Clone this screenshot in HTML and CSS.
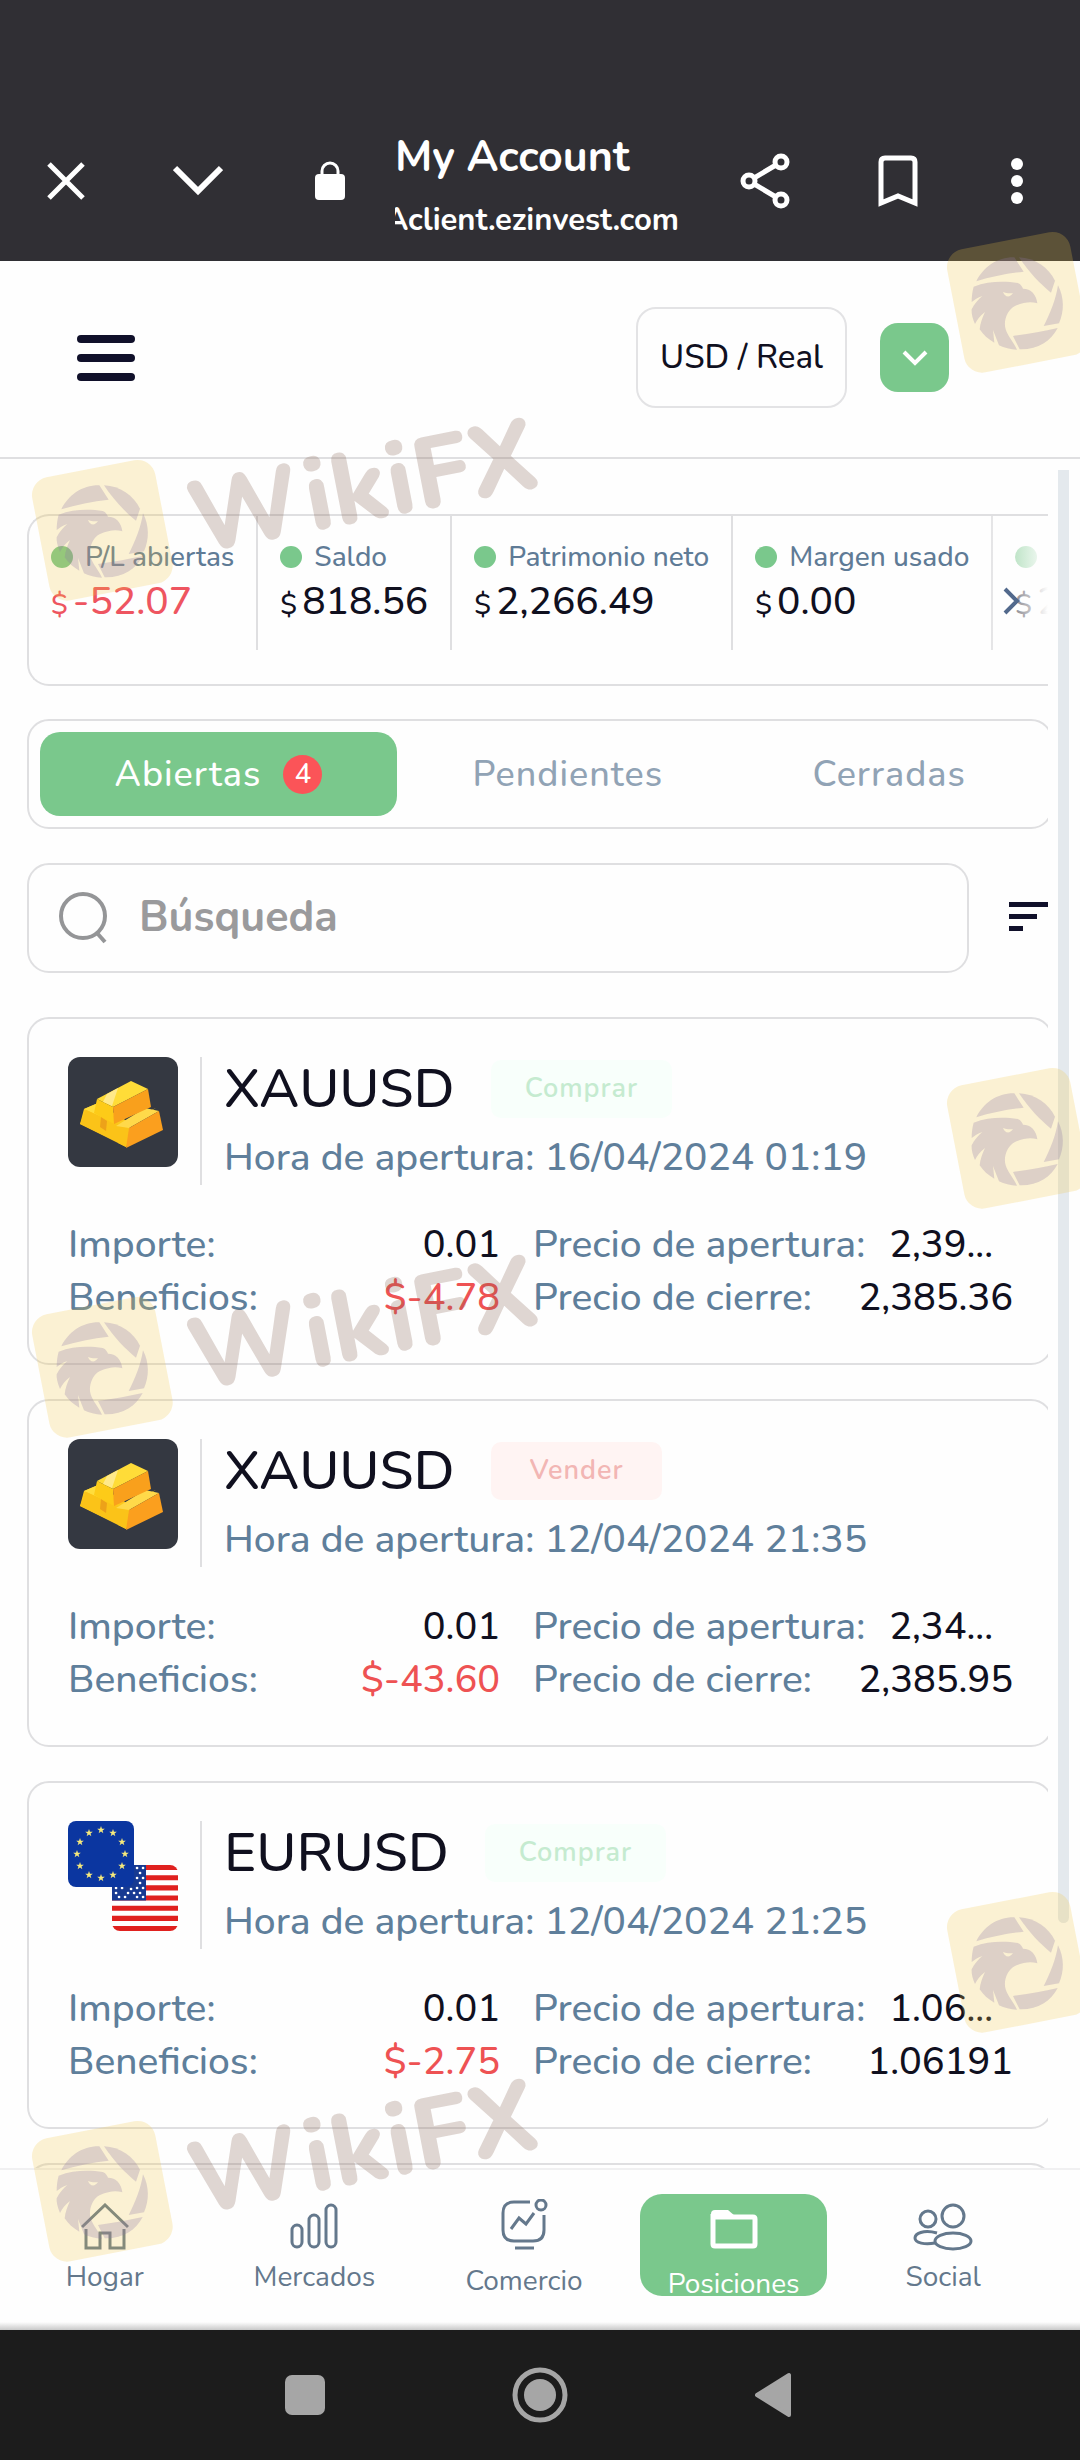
FILE: index.html
```html
<!DOCTYPE html>
<html lang="es">
<head>
    <meta charset="UTF-8">
    <meta name="viewport" content="width=device-width, initial-scale=1.0">
    <title>My Account</title>
    <link rel="stylesheet" href="styles.css">
</head>
<body>
    <!-- shared drawings -->
    <svg class="defs" width="0" height="0" aria-hidden="true">
        <symbol id="gold" viewBox="0 0 110 110">
            <rect width="110" height="110" rx="12" fill="#343841"/>
            <path d="M16 52 30 46 62 66 60 90 12 67z" fill="#fcc81c"/>
            <path d="M16 52 30 46 40 56 34 60z" fill="#ffdd3c"/>
            <path d="M47 70 88 51 60 68 58 90 50 86z" fill="#fdc81a"/>
            <path d="M12 67 58 90 61 72 18 53z" fill="#fbc318"/>
            <path d="M33 60 39 64 38 74 32 70z" fill="#eda219"/>
            <path d="M48 69 77 51 91 54 61 71z" fill="#ffd94a"/>
            <path d="M61 71 91 54 95 73 58 91z" fill="#fb9f1e"/>
            <path d="M29 42 63 24 80 32 45 50z" fill="#ffdc38"/>
            <path d="M39 37 50 31 44 49 35 45z" fill="#ffe98a"/>
            <path d="M29 42 45 50 46 67 26 56z" fill="#fdcb18"/>
            <path d="M45 50 80 32 83 50 46 67z" fill="#f9a01c"/>
        </symbol>
        <symbol id="star" viewBox="-10 -10 20 20">
            <path d="M0-10 2.4-3.2 9.5-3.1 3.8 1.2 5.9 8.1 0 4 -5.9 8.1 -3.8 1.2 -9.5-3.1 -2.4-3.2z"/>
        </symbol>
        <!-- tile with the eagle inside a shutter ring -->
        <symbol id="eagle" viewBox="0 0 450 480">
            <rect x="47" y="47" width="376" height="376" rx="54" transform="rotate(-11 235 235)" fill="#f0c846" fill-opacity=".23"/>
            <g fill="#8c78a5" fill-opacity=".27">
                <path d="M112 172C134 128 176 99 226 100L254 143C206 148 156 158 112 172z"/>
                <path d="M240 100C288 102 328 130 348 170L336 206C306 182 270 146 240 100z"/>
                <path d="M357 184C376 222 376 262 360 298L314 306C334 268 350 228 357 184z"/>
                <path d="M356 312C336 352 294 378 242 376L222 336C268 330 312 322 356 312z"/>
                <path d="M104 188C150 170 200 172 236 177C246 180 250 190 252 194C276 194 292 212 295 238C276 232 256 234 228 246C206 256 192 290 200 316C206 336 222 352 234 377C214 376 196 372 180 364L162 318 166 356C148 346 132 332 122 316C124 296 130 282 138 264C122 276 114 288 108 300C100 282 97 266 98 256C106 240 116 228 130 216C116 220 106 228 98 234C98 218 100 202 104 188zM192 204C198 220 212 222 222 208C212 208 202 208 192 204z" fill-rule="evenodd"/>
            </g>
        </symbol>
    </svg>

    <!-- browser bar -->
    <header class="browser">
        <button class="icon-btn" aria-label="Cerrar">
            <svg width="38" height="38" viewBox="0 0 38 38"><path d="M2 2 36 36M36 2 2 36" stroke="#fff" stroke-width="5" fill="none"/></svg>
        </button>
        <button class="icon-btn" aria-label="Minimizar">
            <svg width="50" height="32" viewBox="0 0 50 32"><path d="M2 3 25 26 48 3" stroke="#fff" stroke-width="6" fill="none"/></svg>
        </button>
        <svg class="lock" width="30" height="40" viewBox="0 0 30 40"><path d="M7 14V10a8 8 0 0 1 16 0v4" stroke="#fff" stroke-width="3" fill="none"/><rect y="13" width="30" height="26" rx="4" fill="#fff"/></svg>
        <div class="page-id">
            <p class="page-title">My Account</p>
            <p class="page-url"><span>Aclient.ezinvest.com</span></p>
        </div>
        <button class="icon-btn" aria-label="Compartir">
            <svg width="50" height="56" viewBox="0 0 50 56"><g fill="none" stroke="#fff" stroke-width="5"><path d="M41 9 9 28 41 47"/><g fill="#302f34"><circle cx="41" cy="9" r="6"/><circle cx="9" cy="28" r="6"/><circle cx="41" cy="47" r="6"/></g></g></svg>
        </button>
        <button class="icon-btn" aria-label="Guardar">
            <svg width="40" height="52" viewBox="0 0 40 52"><path d="M3 48V7q0-4 4-4h26q4 0 4 4v41L20 41z" fill="none" stroke="#fff" stroke-width="5"/></svg>
        </button>
        <button class="icon-btn" aria-label="Más">
            <svg width="14" height="48" viewBox="0 0 14 48"><g fill="#fff"><circle cx="7" cy="7" r="6"/><circle cx="7" cy="24" r="6"/><circle cx="7" cy="41" r="6"/></g></svg>
        </button>
    </header>

    <div class="topbar">
        <button class="menu" aria-label="Menú"><i></i><i></i><i></i></button>
        <button class="account">USD / Real</button>
        <button class="drop" aria-label="Cambiar cuenta">
            <svg width="28" height="20" viewBox="0 0 28 20"><path d="M3 4 14 15 25 4" fill="none" stroke="#fff" stroke-width="4"/></svg>
        </button>
    </div>

    <main class="main">
        <div class="content">
            <div class="stats">
                <div class="stat loss"><p class="stat-name">P/L abiertas</p><p class="stat-value"><small>$</small>-52.07</p></div>
                <div class="stat"><p class="stat-name">Saldo</p><p class="stat-value"><small>$</small>818.56</p></div>
                <div class="stat"><p class="stat-name">Patrimonio neto</p><p class="stat-value"><small>$</small>2,266.49</p></div>
                <div class="stat"><p class="stat-name">Margen usado</p><p class="stat-value"><small>$</small>0.00</p></div>
                <div class="stat"><p class="stat-name">&nbsp;</p><p class="stat-value"><small>$</small>2</p></div>
                <button class="next" aria-label="Siguiente">
                    <svg width="18" height="30" viewBox="0 0 18 30"><path d="M3 3 15 15 3 27" fill="none" stroke="#52698c" stroke-width="4"/></svg>
                </button>
            </div>

            <div class="tabs">
                <button class="tab active">Abiertas <span class="count">4</span></button>
                <button class="tab">Pendientes</button>
                <button class="tab">Cerradas</button>
            </div>

            <div class="search-row">
                <label class="search">
                    <svg width="50" height="54" viewBox="0 0 50 54"><g fill="none" stroke="#949597" stroke-width="4"><circle cx="24" cy="25" r="22"/><path d="M38 42 46 51"/></g></svg>
                    <input type="text" placeholder="Búsqueda" aria-label="Búsqueda">
                </label>
                <button class="sort" aria-label="Ordenar"><i></i><i></i><i></i></button>
            </div>

            <div class="card">
                <div class="card-head">
                    <svg class="pair" width="110" height="110"><use href="#gold"/></svg>
                    <div class="card-title">
                        <h2>XAUUSD <span class="side buy">Comprar</span></h2>
                        <p>Hora de apertura: 16/04/2024 01:19</p>
                    </div>
                </div>
                <dl>
                    <div><dt>Importe:</dt><dd>0.01</dd></div>
                    <div><dt>Precio de apertura:</dt><dd class="cut">2,39...</dd></div>
                    <div><dt>Beneficios:</dt><dd class="red">$-4.78</dd></div>
                    <div><dt>Precio de cierre:</dt><dd>2,385.36</dd></div>
                </dl>
            </div>

            <div class="card">
                <div class="card-head">
                    <svg class="pair" width="110" height="110"><use href="#gold"/></svg>
                    <div class="card-title">
                        <h2>XAUUSD <span class="side sell">Vender</span></h2>
                        <p>Hora de apertura: 12/04/2024 21:35</p>
                    </div>
                </div>
                <dl>
                    <div><dt>Importe:</dt><dd>0.01</dd></div>
                    <div><dt>Precio de apertura:</dt><dd class="cut">2,34...</dd></div>
                    <div><dt>Beneficios:</dt><dd class="red">$-43.60</dd></div>
                    <div><dt>Precio de cierre:</dt><dd>2,385.95</dd></div>
                </dl>
            </div>

            <div class="card">
                <div class="card-head">
                    <svg class="pair" width="110" height="110" viewBox="0 0 110 110">
                        <clipPath id="us"><rect x="44" y="44" width="66" height="66" rx="8"/></clipPath>
                        <g clip-path="url(#us)">
                            <rect x="44" y="44" width="66" height="66" fill="#fff"/>
                            <path d="M44 46.500h66M44 56.700h66M44 66.900h66M44 77h66M44 87.200h66M44 97.400h66M44 107.500h66" stroke="#e0211f" stroke-width="5.100"/>
                            <rect x="44" y="44" width="34" height="35.500" fill="#173a92"/>
                            <path d="M69 47h.1M75 47h.1M72 52h.1M69 57h.1M75 57h.1M72 62h.1M69 67h.1M75 67h.1M48 72h.1M54 67h.1M60 72h.1M66 72h.1M48 67h.1M57 76h.1M63 68h.1M69 76h.1M75 76h.1M72 72h.1M51 76h.1" stroke="#fff" stroke-width="2.600" stroke-linecap="round"/>
                        </g>
                        <rect width="66" height="66" rx="8" fill="#0b36a0"/>
                        <g fill="#f6e97c">
                            <use href="#star" x="29" y="5" width="8" height="8"/><use href="#star" x="41" y="8" width="8" height="8"/>
                            <use href="#star" x="50" y="17" width="8" height="8"/><use href="#star" x="53" y="29" width="8" height="8"/>
                            <use href="#star" x="50" y="41" width="8" height="8"/><use href="#star" x="41" y="50" width="8" height="8"/>
                            <use href="#star" x="29" y="53" width="8" height="8"/><use href="#star" x="17" y="50" width="8" height="8"/>
                            <use href="#star" x="8" y="41" width="8" height="8"/><use href="#star" x="5" y="29" width="8" height="8"/>
                            <use href="#star" x="8" y="17" width="8" height="8"/><use href="#star" x="17" y="8" width="8" height="8"/>
                        </g>
                    </svg>
                    <div class="card-title">
                        <h2>EURUSD <span class="side buy">Comprar</span></h2>
                        <p>Hora de apertura: 12/04/2024 21:25</p>
                    </div>
                </div>
                <dl>
                    <div><dt>Importe:</dt><dd>0.01</dd></div>
                    <div><dt>Precio de apertura:</dt><dd class="cut">1.06...</dd></div>
                    <div><dt>Beneficios:</dt><dd class="red">$-2.75</dd></div>
                    <div><dt>Precio de cierre:</dt><dd>1.06191</dd></div>
                </dl>
            </div>

            <div class="card"></div>
        </div>
        <div class="scroll"></div>
    </main>

    <nav class="nav">
        <a href="#">
            <svg width="48" height="48" viewBox="0 0 48 48"><path d="M1 24 24 2 47 24M5 26V45H19V30H29V45H43V26" fill="none" stroke="currentColor" stroke-width="3"/></svg>
            Hogar
        </a>
        <a href="#">
            <svg width="48" height="48" viewBox="0 0 48 48"><g fill="none" stroke="currentColor" stroke-width="3"><rect x="2" y="22" width="10" height="22" rx="5"/><rect x="19" y="12" width="10" height="32" rx="5"/><rect x="36" y="2" width="10" height="42" rx="5"/></g></svg>
            Mercados
        </a>
        <a href="#" class="mid">
            <svg width="48" height="52" viewBox="0 0 48 52"><g fill="none" stroke="currentColor" stroke-width="3"><path d="M30 3H14Q3 3 3 14V31Q3 42 14 42H33Q44 42 44 31V16M15 49H34"/><circle cx="41" cy="6" r="5"/><path d="M11 30 19 19 26 25 34 14"/></g></svg>
            Comercio
        </a>
        <a href="#" class="active">
            <svg width="48" height="40" viewBox="0 0 48 40"><path d="M3 4V34Q3 36 5 36H43Q45 36 45 34V9Q45 7 43 7H3" fill="none" stroke="#fff" stroke-width="5"/><path d="M1 9V4Q1 0 5 0H18L25 6V9z" fill="#fff"/></svg>
            Posiciones
        </a>
        <a href="#">
            <svg width="60" height="48" viewBox="0 0 60 48"><g fill="none" stroke="currentColor" stroke-width="3"><circle cx="40" cy="13" r="11"/><circle cx="15" cy="16" r="8"/><ellipse cx="40" cy="38" rx="18" ry="8"/><path d="M24 30C10 26 2 31 2 35C2 40 12 42 22 40"/></g></svg>
            Social
        </a>
    </nav>

    <!-- phone buttons -->
    <footer class="system">
        <button class="icon-btn" aria-label="Recientes"><svg width="40" height="40"><rect width="40" height="40" rx="7" fill="#a6a6a6"/></svg></button>
        <button class="icon-btn" aria-label="Inicio"><svg width="56" height="56" viewBox="0 0 56 56"><circle cx="28" cy="28" r="25" fill="none" stroke="#a6a6a6" stroke-width="5"/><circle cx="28" cy="28" r="16" fill="#a6a6a6"/></svg></button>
        <button class="icon-btn" aria-label="Atrás"><svg width="36" height="48" viewBox="0 0 36 48"><path d="M2 24 34 4V44z" fill="#a6a6a6" stroke="#a6a6a6" stroke-width="4" stroke-linejoin="round"/></svg></button>
    </footer>

    <!-- watermarks laid over the page -->
    <div class="marks" aria-hidden="true">
        <div class="mark right m1"><svg width="150" height="160"><use href="#eagle"/></svg></div>
        <div class="mark m2"><svg width="150" height="160"><use href="#eagle"/></svg><span>WikiFX</span></div>
        <div class="mark right m3"><svg width="150" height="160"><use href="#eagle"/></svg></div>
        <div class="mark m4"><svg width="150" height="160"><use href="#eagle"/></svg><span>WikiFX</span></div>
        <div class="mark right m5"><svg width="150" height="160"><use href="#eagle"/></svg></div>
        <div class="mark m6"><svg width="150" height="160"><use href="#eagle"/></svg><span>WikiFX</span></div>
    </div>
</body>
</html>
```
FILE: styles.css
```css
* { box-sizing: border-box; }
body { display: flex; flex-direction: column; position: relative; height: 100vh; margin: 0; overflow: hidden; background: #fefefe; color: #10101f; font-family: Nunito, Lato, 'Open Sans', sans-serif; font-size: 39px; font-weight: 500; }
p, h2, dl, dd { margin: 0; }
button { padding: 0; border: none; background: none; color: inherit; font: inherit; cursor: pointer; }
svg { display: block; flex: none; }
a { text-decoration: none; }
.defs { position: absolute; }

/* browser bar */
.browser { display: flex; align-items: center; height: 261px; padding: 100px 56px 0 47px; background: #302f34; color: #fff; }
.browser .icon-btn + .icon-btn { margin-left: 88px; }
.browser .icon-btn:last-child { margin-left: 92px; }
.icon-btn { display: flex; }
.lock { margin-left: 92px; }
.page-id { flex: 1; margin-left: 50px; padding-top: 10px; font-weight: 700; overflow: hidden; }
.page-title { font-size: 43px; line-height: 68px; }
.page-url { display: flex; justify-content: flex-end; width: 284px; font-size: 31px; line-height: 58px; overflow: hidden; }

/* top bar */
.topbar { display: flex; align-items: center; height: 198px; padding: 0 131px 3px 77px; border-bottom: 2px solid #dfdfe1; }
.menu { display: grid; gap: 11px; width: 58px; margin-right: auto; }
.menu i { height: 8px; border-radius: 4px; background: #10102a; }
.account { height: 101px; padding: 0 22px; border: 2px solid #e3e3e5; border-radius: 20px; font-size: 33px; }
.drop { display: flex; align-items: center; justify-content: center; width: 69px; height: 69px; margin-left: 33px; border-radius: 18px; background: #7ac88c; }

.main { display: flex; flex: 1; min-height: 0; }
.content { flex: 1; min-width: 0; padding: 55px 0 0 27px; overflow: hidden; }
.scroll { width: 11px; height: 85%; margin: 11px 11px 0 10px; border-radius: 0 0 6px 6px; background: #e4e9ed; }

/* balance figures */
.stats { position: relative; display: flex; height: 172px; border: 2px solid #dfdfe1; border-right: none; border-radius: 22px 0 0 22px; overflow: hidden; }
.stat { flex: none; height: 134px; padding: 22px 22px 0; border-right: 2px solid #dfdfe1; }
.stat-name { display: flex; align-items: center; gap: 12px; color: #5f7b96; font-size: 28px; line-height: 38px; white-space: nowrap; }
.stat-name::before { content: ''; width: 22px; height: 22px; border-radius: 50%; background: #7ac88c; }
.stat-value { line-height: 52px; white-space: nowrap; }
.stat-value small { margin-right: 5px; font-size: 28px; }
.loss .stat-value { color: #ee5560; }
.stats::after { content: ''; position: absolute; right: 0; top: -2px; bottom: -2px; width: 70px; background: linear-gradient(to right, rgba(254, 254, 254, 0), #fefefe); }
.next { position: absolute; z-index: 1; right: 28px; top: 70px; }

/* tabs */
.tabs { display: grid; grid-template-columns: 357px 1fr 1fr; column-gap: 20px; height: 110px; margin: 33px -5px 0 0; padding: 11px; border: 2px solid #dfdfe1; border-radius: 22px; }
.tab { color: #91a3b5; font-size: 36px; letter-spacing: 1px; border-radius: 20px; }
.tab.active { display: flex; align-items: center; justify-content: center; gap: 22px; background: #7ac88c; color: #fff; }
.count { width: 39px; height: 39px; border-radius: 50%; background: #fb5458; font-size: 28px; line-height: 39px; letter-spacing: 0; }

/* search */
.search-row { display: flex; align-items: center; margin-top: 34px; }
.search { display: flex; align-items: center; flex: 1; gap: 30px; height: 110px; padding: 0 30px; border: 2px solid #dfdfe1; border-radius: 22px; }
.search input { flex: 1; min-width: 0; padding: 0 0 2px; border: none; outline: none; background: none; font: 700 43px Nunito, Lato, sans-serif; }
.search input::placeholder { color: #9a9a9c; opacity: 1; }
.sort { display: grid; gap: 7px; width: 39px; margin: 0 0 4px 40px; }
.sort i { height: 5px; background: #10102a; }
.sort i:nth-child(2) { width: 28px; }
.sort i:nth-child(3) { width: 14px; }

/* positions */
.card { height: 348px; margin: 34px -5px 0 0; padding: 38px 38px 0 39px; border: 2px solid #dfdfe1; border-radius: 22px; }
.search-row + .card { margin-top: 44px; }
.card-head { display: flex; }
.card-title { height: 128px; margin-left: 22px; padding-left: 22px; border-left: 2px solid #dfdfe1; }
.card h2 { display: flex; align-items: center; gap: 36px; height: 63px; font-size: 55px; font-weight: 500; }
.card p { margin-top: 12px; color: #5f7f9b; line-height: 52px; }
.side { height: 58px; padding: 0 34px; border-radius: 10px; font-size: 27px; font-weight: 600; line-height: 58px; letter-spacing: 1px; }
.buy { background: #f8fffb; color: #c5ebd0; }
.sell { padding: 0 39px; background: #fff4f3; color: #f2b6b4; }
.card dl { display: grid; grid-template-columns: 432px 1fr; column-gap: 33px; margin-top: 33px; line-height: 53px; }
.card dl div { display: flex; justify-content: space-between; }
.card dt { color: #5f7f9b; }
.card dd { font-size: 38px; }
.card .cut { margin-right: 20px; }
.card .red { color: #ee5253; }

/* bottom menu */
.nav { display: grid; grid-template-columns: repeat(5, 1fr); height: 162px; padding: 24px 32px 0 0; border-top: 2px solid #f0f0f1; background: linear-gradient(#fefefe 152px, #c8c8c8); font-size: 28px; font-weight: 400; }
.nav a { display: flex; flex-direction: column; align-items: center; gap: 8px; height: 102px; padding-top: 9px; color: #64788c; line-height: 36px; }
.nav svg { height: 48px; }
.nav .mid { padding-top: 5px; gap: 12px; }
.nav .mid svg { height: 52px; }
.nav .active { gap: 12px; margin: 0 11px; padding-top: 12px; border-radius: 22px; background: #7ac88c; color: #fff; overflow: hidden; }

.system { display: flex; align-items: center; justify-content: center; gap: 187px; height: 130px; padding-right: 4px; background: #1c1c1c; }

/* watermarks */
.marks { position: absolute; inset: 0; overflow: hidden; pointer-events: none; }
.mark { position: absolute; left: 24px; display: flex; }
.mark.right { left: auto; right: -9px; }
.mark span { margin: -26px 0 0 18px; color: rgba(130, 95, 80, .25); font: 800 101px/122px Nunito, Lato, sans-serif; transform: rotate(-11deg); }
.m1 { top: 224px; }
.m2 { top: 452px; }
.m3 { top: 1060px; }
.m4 { top: 1289px; }
.m5 { top: 1884px; }
.m6 { top: 2113px; }
```
